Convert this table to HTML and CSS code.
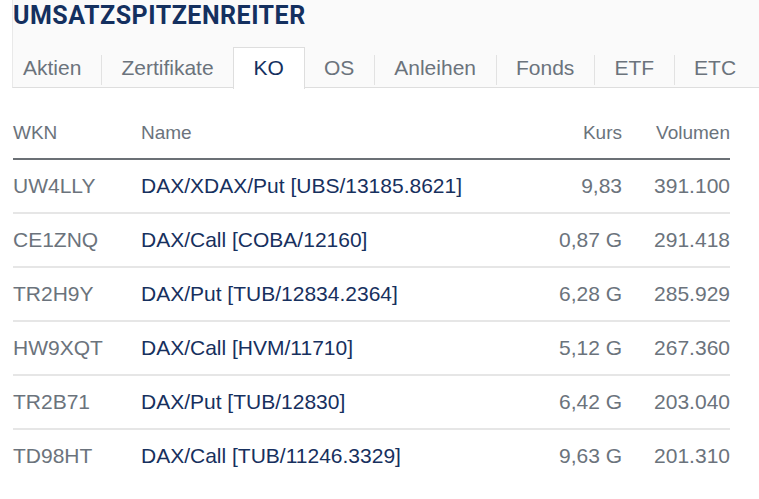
FILE: index.html
```html
<!DOCTYPE html>
<html lang="de">
<head>
<meta charset="utf-8">
<title>Umsatzspitzenreiter</title>
<link rel="stylesheet" href="styles.css">
</head>
<body>
<div class="top">
  <h1 class="title">UMSATZSPITZENREITER</h1>
  <ul class="tabs">
    <li class="tab first">Aktien</li>
    <li class="tab">Zertifikate</li>
    <li class="tab active">KO</li>
    <li class="tab after-active">OS</li>
    <li class="tab">Anleihen</li>
    <li class="tab">Fonds</li>
    <li class="tab">ETF</li>
    <li class="tab">ETC</li>
  </ul>
</div>
<table class="list">
  <thead>
    <tr><th class="c-wkn">WKN</th><th class="c-name">Name</th><th class="c-num c-kurs">Kurs</th><th class="c-num c-vol">Volumen</th></tr>
  </thead>
  <tbody>
    <tr><td class="c-wkn">UW4LLY</td><td class="c-name"><a>DAX/XDAX/Put [UBS/13185.8621]</a></td><td class="c-num">9,83</td><td class="c-num">391.100</td></tr>
    <tr><td class="c-wkn">CE1ZNQ</td><td class="c-name"><a>DAX/Call [COBA/12160]</a></td><td class="c-num">0,87 G</td><td class="c-num">291.418</td></tr>
    <tr><td class="c-wkn">TR2H9Y</td><td class="c-name"><a>DAX/Put [TUB/12834.2364]</a></td><td class="c-num">6,28 G</td><td class="c-num">285.929</td></tr>
    <tr><td class="c-wkn">HW9XQT</td><td class="c-name"><a>DAX/Call [HVM/11710]</a></td><td class="c-num">5,12 G</td><td class="c-num">267.360</td></tr>
    <tr><td class="c-wkn">TR2B71</td><td class="c-name"><a>DAX/Put [TUB/12830]</a></td><td class="c-num">6,42 G</td><td class="c-num">203.040</td></tr>
    <tr><td class="c-wkn">TD98HT</td><td class="c-name"><a>DAX/Call [TUB/11246.3329]</a></td><td class="c-num">9,63 G</td><td class="c-num">201.310</td></tr>
  </tbody>
</table>
</body>
</html>
```
FILE: styles.css
```css
html, body {
  margin: 0;
  padding: 0;
  background: #ffffff;
  font-family: "Liberation Sans", Arial, sans-serif;
}

.top {
  margin-left: 12px;
  border-left: 1px solid #e9e9e9;
  background: #fafafa;
  border-bottom: 1px solid #dedede;
  height: 88px;
  box-sizing: border-box;
  display: flex;
  flex-direction: column;
}

.title {
  margin: 0;
  padding: 2px 0 0 0;
  font-family: Roboto, "Liberation Sans", sans-serif;
  font-weight: 700;
  font-size: 25px;
  line-height: 28px;
  letter-spacing: 0.5px;
  color: #14305f;
}

.tabs {
  list-style: none;
  margin: auto 0 -1px 0;
  padding: 0;
  display: flex;
  height: 41px;
}

.tab {
  position: relative;
  padding: 1px 20px 0 20px;
  font-size: 21px;
  line-height: 40px;
  color: #6b737c;
  box-sizing: border-box;
}

.tab::before {
  content: "";
  position: absolute;
  left: 0;
  top: 8px;
  bottom: 3px;
  width: 1px;
  background: #e2e2e2;
}

.tab.first {
  padding-left: 10px;
}

.tab.first::before,
.tab.active::before,
.tab.after-active::before {
  display: none;
}

.tab.active {
  background: #ffffff;
  border: 1px solid #dedede;
  border-bottom: none;
  margin: 0 -1px;
  padding-top: 0;
  color: #14305f;
  height: 42px;
}

.list {
  margin: 19px 0 0 13px;
  width: 717px;
  border-collapse: collapse;
}

.list th {
  font-weight: 400;
  font-size: 19px;
  color: #6b737c;
  height: 51px;
  padding: 0;
  text-align: left;
  border-bottom: 2px solid #6b7075;
}

.list td {
  font-size: 21px;
  color: #6b737c;
  height: 52px;
  padding: 0;
  border-bottom: 2px solid #e6e6e6;
}

.list tbody tr:last-child td {
  border-bottom: none;
}

.list .c-wkn {
  width: 128px;
}

.list .c-name a {
  color: #17305e;
  text-decoration: none;
}

.list .c-num {
  text-align: right;
}

.list .c-vol {
  width: 108px;
}
```
